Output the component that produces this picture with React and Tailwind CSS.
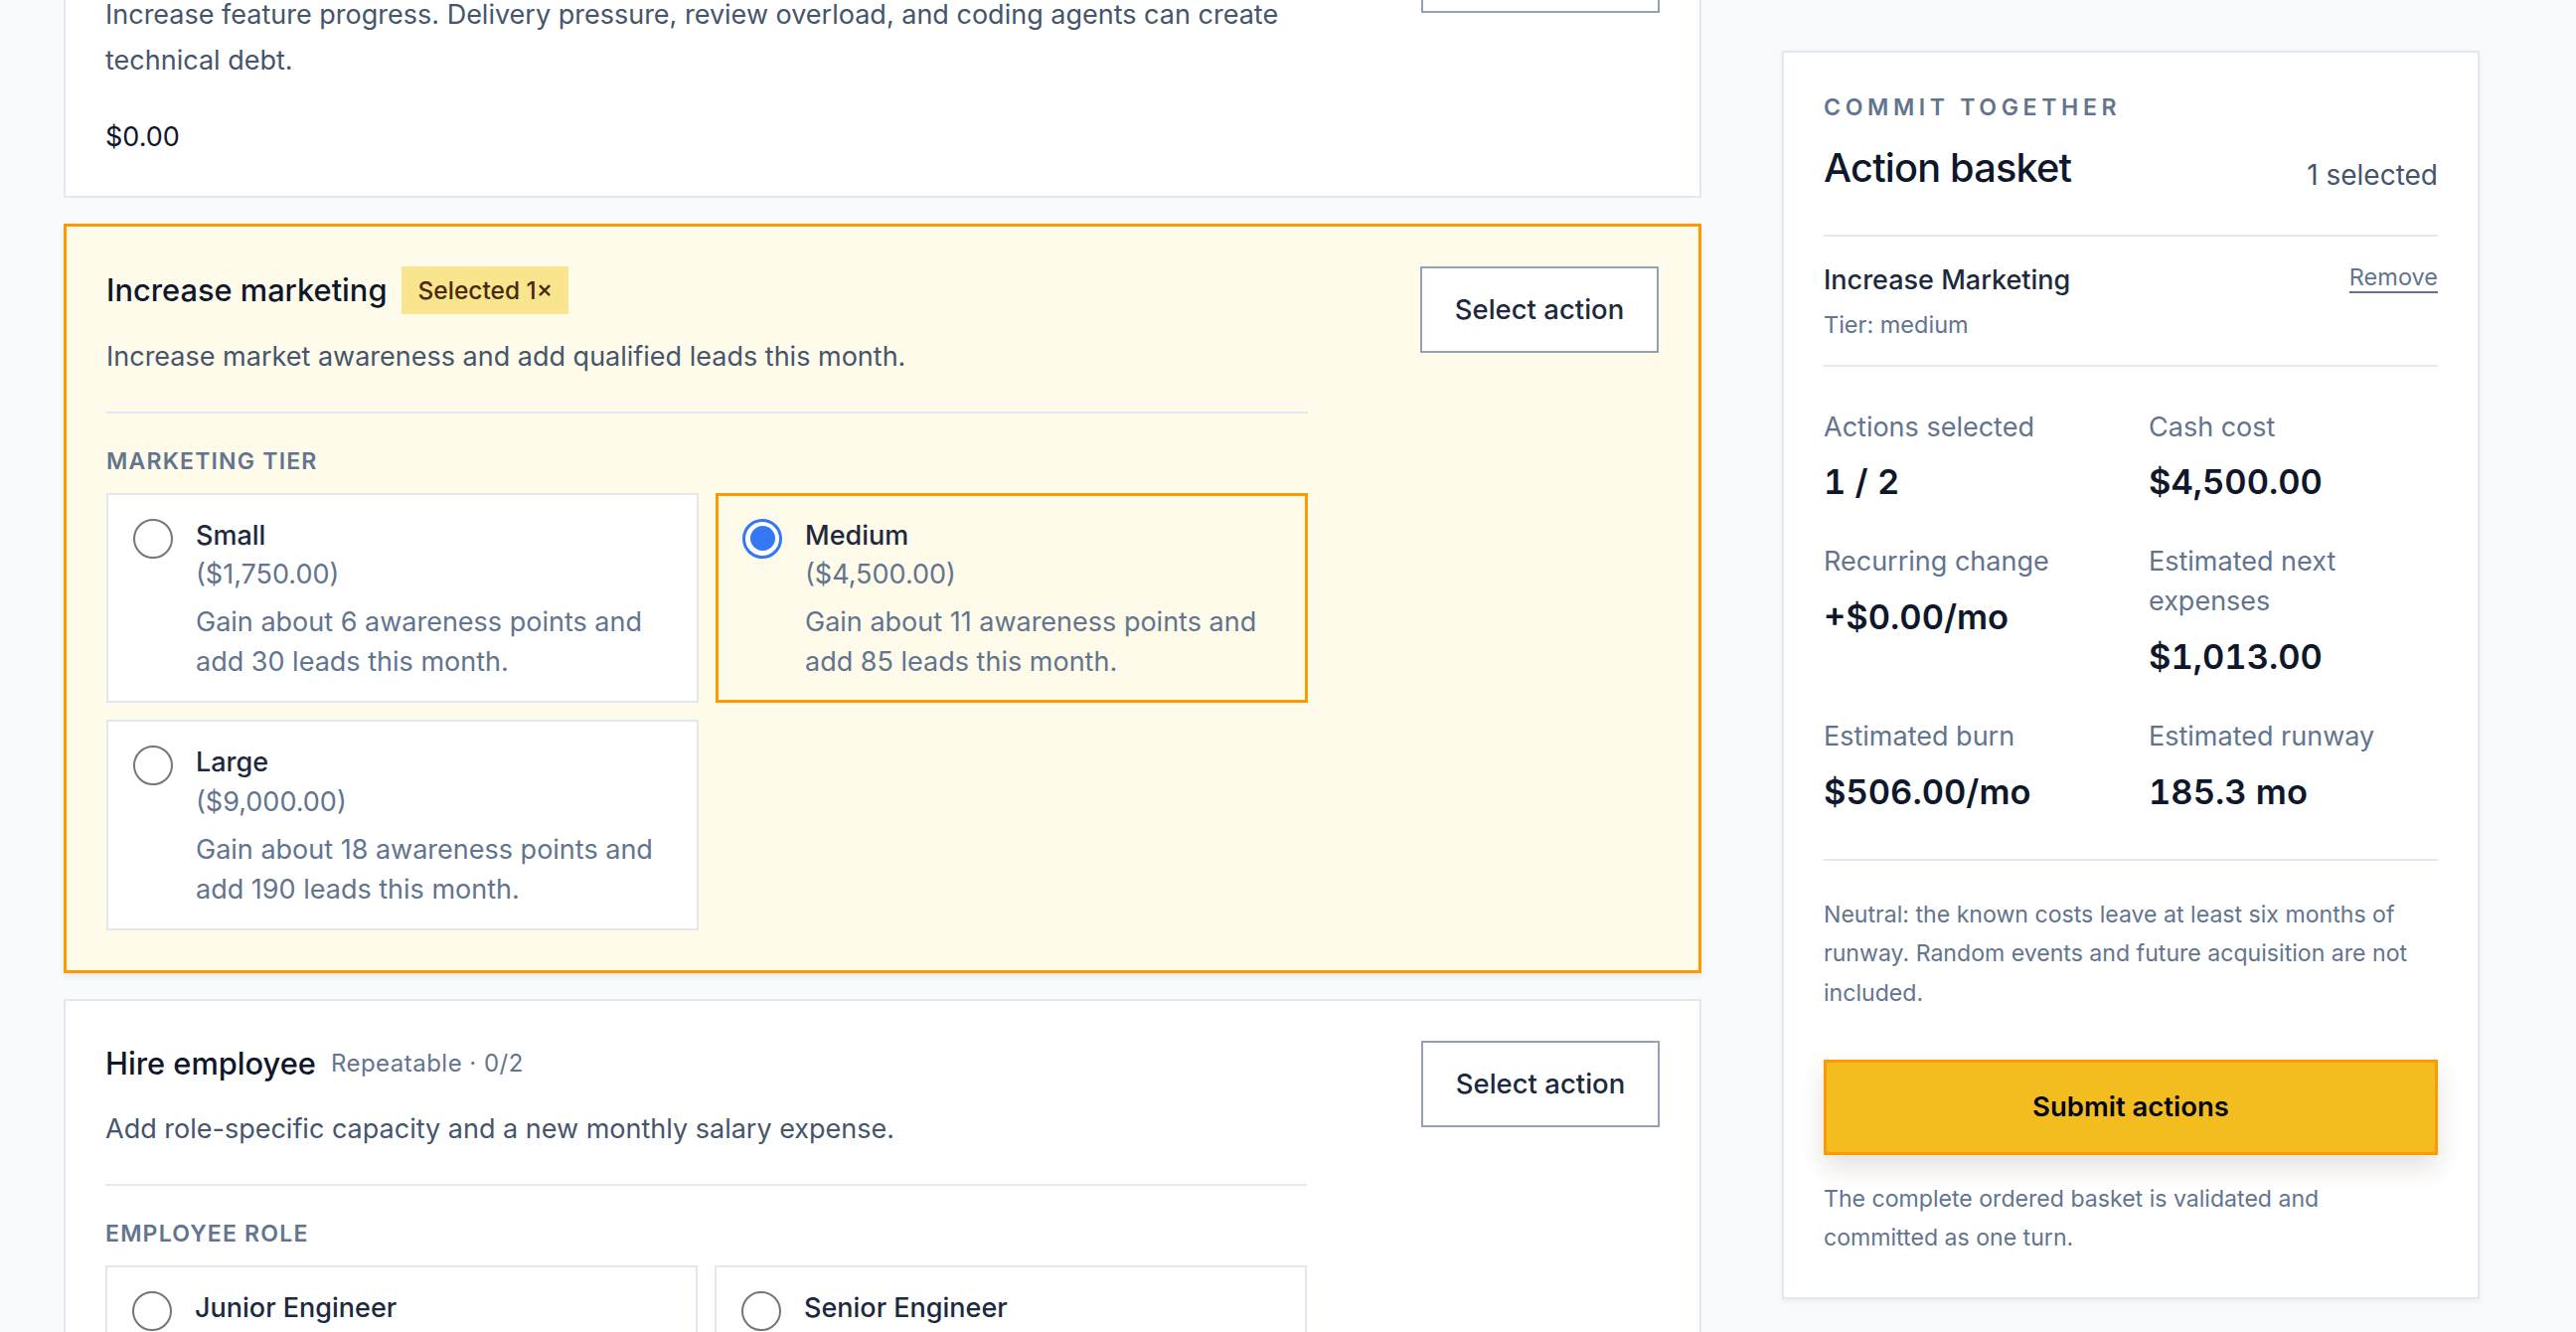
import { useState } from 'react'

const tiers = [
    { id: 'small', label: 'Small', price: '($1,750.00)', text: 'Gain about 6 awareness points and add 30 leads this month.' },
    { id: 'medium', label: 'Medium', price: '($4,500.00)', text: 'Gain about 11 awareness points and add 85 leads this month.' },
    { id: 'large', label: 'Large', price: '($9,000.00)', text: 'Gain about 18 awareness points and add 190 leads this month.' },
]

const roles = [
    { id: 'junior', label: 'Junior Engineer' },
    { id: 'senior', label: 'Senior Engineer' },
]

const stats = [
    { label: 'Actions selected', value: '1 / 2' },
    { label: 'Cash cost', value: '$4,500.00' },
    { label: 'Recurring change', value: '+$0.00/mo' },
    { label: 'Estimated next expenses', value: '$1,013.00' },
    { label: 'Estimated burn', value: '$506.00/mo' },
    { label: 'Estimated runway', value: '185.3 mo' },
]

function Radio({ checked }) {
    if (checked) {
        return (
            <span className="mt-[3px] flex h-[40px] w-[40px] shrink-0 items-center justify-center rounded-full border-[3px] border-[#3478f6] bg-white">
                <span className="h-[25px] w-[25px] rounded-full bg-[#3478f6]" />
            </span>
        )
    }
    return <span className="mt-[3px] h-[40px] w-[40px] shrink-0 rounded-full border-2 border-[#767676] bg-white" />
}

function Option({ option, checked, onPick }) {
    return (
        <label
            onClick={onPick}
            className={
                checked
                    ? 'flex cursor-pointer gap-[23px] border-[3px] border-amber-500 px-[24px] pt-[20px] pb-[19px]'
                    : 'flex cursor-pointer gap-[23px] border-2 border-slate-200 bg-white px-[25px] pt-[21px] pb-[20px]'
            }
        >
            <Radio checked={checked} />
            <div className="min-w-0 text-[27px] leading-[39.7px]">
                <p className="font-medium text-slate-800">{option.label}</p>
                {option.price && <p className="text-slate-500">{option.price}</p>}
                {option.text && <p className="mt-[8px] text-slate-500">{option.text}</p>}
            </div>
        </label>
    )
}

function SelectButton() {
    return (
        <button className="h-[87px] w-[240px] shrink-0 border-2 border-slate-400 bg-white text-[27.5px] font-medium text-slate-800">
            Select action
        </button>
    )
}

function ActionCard({ title, tag, badge, description, selected, children }) {
    return (
        <section
            className={
                selected
                    ? 'flex justify-between gap-[40px] border-[3px] border-amber-500 bg-amber-50 p-[40px] shadow-[0_3px_6px_rgba(15,23,42,0.08)]'
                    : 'flex justify-between gap-[40px] border-2 border-slate-200 bg-white p-[40px]'
            }
        >
            <div className="min-w-0 max-w-[1209px] flex-1">
                <div className="flex min-h-[46px] items-center gap-[15px]">
                    <h3 className="text-[30.8px] leading-[46px] font-medium text-slate-900">{title}</h3>
                    {badge && (
                        <span className="flex h-[48px] items-center bg-[#fae58f] px-[16px] text-[24.5px] font-medium text-[#4a2a0c]">
                            {badge}
                        </span>
                    )}
                    {tag && <span className="text-[24px] tracking-[0.02em] text-slate-500">{tag}</span>}
                </div>
                <p className="mt-[20px] text-[27px] leading-[46.3px] text-slate-600">{description}</p>
                {children}
            </div>
            <SelectButton />
        </section>
    )
}

function OptionGroup({ label, options, value, onChange }) {
    return (
        <div className="mt-[31px] border-t-2 border-slate-200 pt-[32px]">
            <p className="text-[23.1px] leading-[33px] font-semibold uppercase tracking-[0.05em] text-slate-500">{label}</p>
            <div className="mt-[15px] grid grid-cols-2 gap-[17px]">
                {options.map((o) => (
                    <Option key={o.id} option={o} checked={value === o.id} onPick={() => onChange(o.id)} />
                ))}
            </div>
        </div>
    )
}

function Basket() {
    return (
        <aside className="mt-[51px] w-[702px] shrink-0 self-start border-2 border-slate-200 bg-white px-[40px] pt-[39px] pb-[39px] shadow-[0_2px_6px_rgba(15,23,42,0.06)]">
            <p className="text-[23.1px] leading-[33px] font-semibold uppercase tracking-[0.2em] text-slate-500">Commit together</p>
            <div className="mt-[18px] flex items-baseline justify-between border-b-2 border-slate-200 pb-[40px]">
                <h2 className="text-[39.7px] leading-[53px] font-medium tracking-[-0.02em] text-slate-900">Action basket</h2>
                <span className="translate-y-[3px] text-[28px] text-slate-600">1 selected</span>
            </div>

            <div className="border-b-2 border-slate-200 py-[24px]">
                <div className="flex items-start justify-between">
                    <p className="text-[27px] leading-[39.7px] font-medium text-slate-800">Increase Marketing</p>
                    <button className="text-[23.5px] leading-[33px] text-slate-500 underline decoration-2 underline-offset-[6px]">
                        Remove
                    </button>
                </div>
                <p className="mt-[8px] text-[23.5px] leading-[33px] text-slate-500">Tier: medium</p>
            </div>

            <div className="grid grid-cols-2 gap-x-[36px] gap-y-[37px] border-b-2 border-slate-200 pt-[41px] pb-[44px]">
                {stats.map((s) => (
                    <div key={s.label}>
                        <p className="text-[27px] leading-[39.7px] text-slate-500">{s.label}</p>
                        <p className="mt-[13px] text-[34.5px] leading-[46px] font-semibold tabular-nums text-slate-900">{s.value}</p>
                    </div>
                ))}
            </div>

            <p className="pt-[35px] text-[23.1px] leading-[39.7px] text-slate-500">
                Neutral: the known costs leave at least six months of runway. Random events and future acquisition are not included.
            </p>

            <button className="mt-[46px] h-[96px] w-full border-[3px] border-amber-500 bg-[#f4bd1f] text-[27.5px] font-semibold text-slate-950 shadow-[0_12px_24px_rgba(60,40,20,0.14)]">
                Submit actions
            </button>

            <p className="mt-[25px] text-[23.1px] leading-[39.7px] text-slate-500">
                The complete ordered basket is validated and committed as one turn.
            </p>
        </aside>
    )
}

export default function App() {
    const [tier, setTier] = useState('medium')
    const [role, setRole] = useState(null)

    return (
        <div className="h-[1340px] overflow-hidden bg-[#f9fafb] font-[family-name:Inter,'Liberation_Sans',sans-serif]">
            <div className="flex gap-[81px] pl-[64px]">
                <div className="-mt-[116px] flex w-[1648px] shrink-0 flex-col gap-[26px]">
                    <ActionCard
                        title="Ship features"
                        description="Increase feature progress. Delivery pressure, review overload, and coding agents can create technical debt."
                    >
                        <p className="mt-[33px] text-[27px] leading-[39.7px] text-slate-900">$0.00</p>
                    </ActionCard>

                    <ActionCard
                        title="Increase marketing"
                        badge="Selected 1×"
                        selected
                        description="Increase market awareness and add qualified leads this month."
                    >
                        <OptionGroup label="Marketing tier" options={tiers} value={tier} onChange={setTier} />
                    </ActionCard>

                    <ActionCard
                        title="Hire employee"
                        tag="Repeatable · 0/2"
                        description="Add role-specific capacity and a new monthly salary expense."
                    >
                        <OptionGroup label="Employee role" options={roles} value={role} onChange={setRole} />
                    </ActionCard>
                </div>

                <Basket />
            </div>
        </div>
    )
}
